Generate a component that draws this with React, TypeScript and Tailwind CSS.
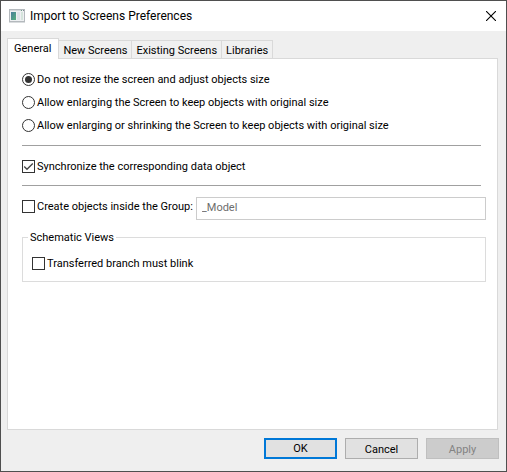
import React, { useState } from 'react';
import clsx from 'clsx';

const tabs = ['General', 'New Screens', 'Existing Screens', 'Libraries'];

const resizeOptions = [
  'Do not resize the screen and adjust objects size',
  'Allow enlarging the Screen to keep objects with original size',
  'Allow enlarging or shrinking the Screen to keep objects with original size',
];

interface CheckProps {
  label: string;
  defaultChecked?: boolean;
}

function Check({ label, defaultChecked }: CheckProps) {
  return (
    <label className="flex h-4 items-center gap-0.5 whitespace-nowrap">
      <span className="grid h-[13px] w-[13px] shrink-0">
        <input
          type="checkbox"
          defaultChecked={defaultChecked}
          className="peer col-start-1 row-start-1 h-[13px] w-[13px] appearance-none border border-[#333] bg-white"
        />
        <svg
          viewBox="0 0 13 13"
          className="pointer-events-none invisible col-start-1 row-start-1 h-[13px] w-[13px] peer-checked:visible"
        >
          <path d="M2.2 6.5 5 9.3 10.8 3.5" fill="none" stroke="#444" strokeWidth="1.3" />
        </svg>
      </span>
      <span className="pt-0.5">{label}</span>
    </label>
  );
}

function WindowIcon() {
  return (
    <svg width="16" height="14" viewBox="0 0 16 14" className="shrink-0">
      <defs>
        <linearGradient id="screen" x1="0" y1="0" x2="1" y2="1">
          <stop offset="0" stopColor="#4a7d9c" />
          <stop offset="1" stopColor="#55b07c" />
        </linearGradient>
      </defs>
      <rect x="0.5" y="0.5" width="15" height="12" fill="#eef0f2" stroke="#b4b9bd" />
      <rect x="1" y="1" width="11" height="1" fill="#d3d7da" />
      <rect x="12" y="1" width="1" height="1" fill="#6c9a86" />
      <rect x="14" y="1" width="1" height="1" fill="#7c8790" />
      <rect x="2" y="3" width="5" height="8" fill="url(#screen)" />
      <rect x="8" y="3" width="3" height="8" fill="#dfe3e8" />
      <rect x="12" y="3" width="2" height="8" fill="#d5e4dc" />
      <rect x="0" y="13" width="16" height="1" fill="#d9dcde" />
    </svg>
  );
}

export default function App() {
  const [active, setActive] = useState(0);

  return (
    <div className="flex min-h-screen flex-col border border-[#4f4f4f] bg-[#efefef] font-['Roboto',sans-serif] text-[11px] leading-4 text-black">
      {/* Title bar */}
      <header className="flex h-[30px] items-center bg-white pr-2.5 pl-2">
        <WindowIcon />
        <h1 className="ml-[5px] flex-1 text-[12px]">Import to Screens Preferences</h1>
        <button type="button" aria-label="Close" className="flex h-4 items-center">
          <svg width="10" height="10" viewBox="0 0 10 10">
            <path d="M0 0 10 10M10 0 0 10" stroke="#000" strokeWidth="1.1" />
          </svg>
        </button>
      </header>

      <main className="flex flex-1 flex-col px-1.5 pt-[7px]">
        {/* Tabs */}
        <div role="tablist" className="flex items-end">
          {tabs.map((tab, i) => (
            <button
              key={tab}
              type="button"
              role="tab"
              aria-selected={i === active}
              onClick={() => setActive(i)}
              className={clsx(
                'border-t border-r border-[#d9d9d9] whitespace-nowrap',
                i === active
                  ? 'relative z-10 -mb-px h-[21px] border-l bg-white pr-[7px] pl-1.5'
                  : 'h-[18px] bg-[#f0f0f0] px-1 pt-0.5'
              )}
            >
              {tab}
            </button>
          ))}
        </div>

        {/* General page */}
        <div role="tabpanel" className="mr-0.5 flex-1 border border-[#d9d9d9] bg-white pt-3 pr-[11px] pl-3.5">
          <div role="radiogroup" aria-label="Resize" className="flex flex-col gap-[7px]">
            {resizeOptions.map((option, i) => (
              <label key={option} className="flex h-4 items-center gap-0.5 whitespace-nowrap">
                <input
                  type="radio"
                  name="resize"
                  defaultChecked={i === 0}
                  className="h-[13px] w-[13px] shrink-0 appearance-none rounded-full border border-[#333] bg-white bg-clip-content p-0.5 checked:bg-[#333]"
                />
                <span className="pt-0.5">{option}</span>
              </label>
            ))}
          </div>

          <hr className="mt-3 mr-[5px] border-[#a0a0a0]" />
          <div className="pt-3 pb-[11px]">
            <Check label="Synchronize the corresponding data object" defaultChecked />
          </div>
          <hr className="mr-[5px] border-[#a0a0a0]" />

          <div className="mt-[11px] flex items-start gap-[3px]">
            <div className="pt-px">
              <Check label="Create objects inside the Group:" />
            </div>
            <input
              type="text"
              aria-label="Group name"
              defaultValue="_Model"
              disabled
              className="h-[23px] min-w-0 flex-1 border border-[#ccc] bg-white px-[5px] pb-0.5 text-[#6d6d6d]"
            />
          </div>

          <fieldset className="mt-2 border border-[#dcdcdc] px-[9px] pt-[9px] pb-2.5">
            <legend className="-ml-1 px-0.5 pt-0.5">Schematic Views</legend>
            <Check label="Transferred branch must blink" />
          </fieldset>
        </div>
      </main>

      {/* Buttons */}
      <footer className="flex justify-end gap-2 px-[7px] pt-2 pb-3">
        <button type="button" className="h-[21px] w-[73px] border-2 border-[#0078d7] bg-[#e1e1e1] pt-px">
          OK
        </button>
        <button type="button" className="h-[21px] w-[73px] border border-[#adadad] bg-[#e1e1e1] pt-0.5">
          Cancel
        </button>
        <button type="button" disabled className="h-[21px] w-[73px] border border-[#bfbfbf] bg-[#ccc] pt-0.5 text-[#838383]">
          Apply
        </button>
      </footer>
    </div>
  );
}
